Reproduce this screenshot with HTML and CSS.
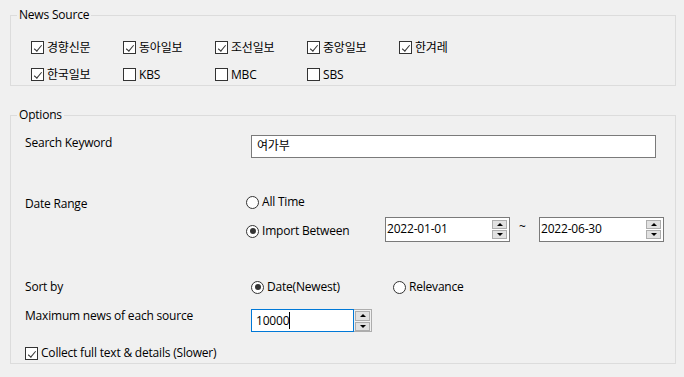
FILE: index.html
```html
<!DOCTYPE html>
<html lang="ko">
<head>
<meta charset="utf-8">
<title>News Options</title>
<link rel="stylesheet" href="styles.css">
</head>
<body>
<div class="page">
  <div class="group g1">
    <div class="legend">News Source</div>
    <div class="sources">
      <label class="item"><span class="chk on"></span>경향신문</label>
      <label class="item"><span class="chk on"></span>동아일보</label>
      <label class="item"><span class="chk on"></span>조선일보</label>
      <label class="item"><span class="chk on"></span>중앙일보</label>
      <label class="item"><span class="chk on"></span>한겨레</label>
      <label class="item"><span class="chk on"></span>한국일보</label>
      <label class="item"><span class="chk"></span>KBS</label>
      <label class="item"><span class="chk"></span>MBC</label>
      <label class="item"><span class="chk"></span>SBS</label>
    </div>
  </div>

  <div class="group g2">
    <div class="legend">Options</div>
    <div class="opts">
      <div class="row keyword">
        <div class="lbl wide">Search Keyword</div>
        <div class="textbox kw">여가부</div>
      </div>

      <div class="row daterange">
        <div class="lbl narrow dr">Date Range</div>
        <div class="drcol">
          <label class="radio-item"><span class="radio"></span>All Time</label>
          <div class="between">
            <label class="radio-item ib"><span class="radio on"></span>Import Between</label>
            <div class="spinbox date">
              <span class="val">2022-01-01</span>
              <span class="spin"><span class="btn up"></span><span class="btn down"></span></span>
            </div>
            <span class="tilde">~</span>
            <div class="spinbox date">
              <span class="val">2022-06-30</span>
              <span class="spin"><span class="btn up"></span><span class="btn down"></span></span>
            </div>
          </div>
        </div>
      </div>

      <div class="row sort">
        <div class="lbl wide">Sort by</div>
        <label class="radio-item newest"><span class="radio on"></span>Date(Newest)</label>
        <label class="radio-item"><span class="radio"></span>Relevance</label>
      </div>

      <div class="row max">
        <div class="lbl wide">Maximum news of each source</div>
        <div class="num">
          <div class="numtext">10000<span class="caret"></span></div>
          <div class="numspin"><span class="btn up"></span><span class="btn down"></span></div>
        </div>
      </div>

      <div class="row collect">
        <label class="item"><span class="chk on"></span>Collect full text &amp; details (Slower)</label>
      </div>
    </div>
  </div>
</div>
</body>
</html>
```

FILE: styles.css
```css
* { box-sizing: border-box; }
html, body { margin: 0; padding: 0; }
body {
  background: #f0f0f0;
  color: #000;
  font-family: "Segoe UI", "Open Sans", "Noto Sans CJK KR", sans-serif;
  font-size: 12px;
  line-height: 16px;
  letter-spacing: -0.2px;
  width: 684px;
  height: 377px;
  overflow: hidden;
}
.page { padding: 15px 8px 0 10px; }

.group { border: 1px solid #dcdcdc; }
.legend {
  width: fit-content;
  height: 16px;
  margin: -9px 0 0 6px;
  padding: 0 2px;
  background: #f0f0f0;
  line-height: 16px;
}

/* News source group */
.sources {
  display: grid;
  grid-template-columns: repeat(5, 92px);
  row-gap: 10px;
  margin: 16px 0 2px 20px;
}
.item {
  display: flex;
  align-items: center;
  gap: 3px;
  height: 17px;
  white-space: nowrap;
}
.chk {
  position: relative;
  flex: none;
  width: 13px;
  height: 13px;
  border: 1px solid #333;
  background: #fff;
}
.chk.on::after {
  content: "";
  position: absolute;
  left: 7px;
  top: 1px;
  width: 3px;
  height: 7px;
  border: solid #333;
  border-width: 0 1.4px 1.4px 0;
  transform: rotate(40deg);
  transform-origin: 0 0;
}

/* Options group */
.g2 { margin-top: 29px; }
.opts { padding: 0 0 2px 14px; }
.row { display: flex; }
.lbl { flex: none; white-space: nowrap; }
.lbl.wide { width: 226px; }
.lbl.narrow { width: 221px; }

.keyword { margin-top: 12px; height: 23px; align-items: flex-start; }
.textbox {
  border: 1px solid #7a7a7a;
  background: #fff;
  height: 23px;
  line-height: 20px;
  padding-left: 5px;
}
.textbox.kw { width: 405px; }

.daterange { margin-top: 36px; }
.dr { padding-top: 2px; }
.drcol { display: flex; flex-direction: column; }
.radio-item {
  display: flex;
  align-items: center;
  gap: 3px;
  height: 16px;
  white-space: nowrap;
}
.radio {
  position: relative;
  flex: none;
  width: 13px;
  height: 13px;
  border: 1px solid #333;
  border-radius: 50%;
  background: #fff;
}
.radio.on::after {
  content: "";
  position: absolute;
  left: 2.5px;
  top: 2.5px;
  width: 6px;
  height: 6px;
  border-radius: 50%;
  background: #333;
}
.between {
  display: flex;
  align-items: center;
  margin-top: 7px;
  height: 25px;
}
.radio-item.ib { width: 139px; padding-top: 3px; height: 19px; }
.spinbox {
  display: flex;
  justify-content: space-between;
  width: 125px;
  height: 25px;
  border: 1px solid #7a7a7a;
  background: #fff;
}
.spinbox .val { line-height: 22px; padding-left: 1px; }
.spin {
  display: flex;
  flex-direction: column;
  gap: 1px;
  padding: 2px 2px 0 0;
}
.btn {
  position: relative;
  display: block;
  width: 15px;
  height: 9px;
  background: #e1e1e1;
  border: 1px solid #adadad;
}
.btn::after {
  content: "";
  position: absolute;
  left: 4px;
  top: 2px;
  border-left: 3px solid transparent;
  border-right: 3px solid transparent;
}
.btn.up::after { border-bottom: 3px solid #000; }
.btn.down::after { border-top: 3px solid #000; }
.tilde { width: 29px; padding-left: 9px; margin-top: -6px; }

.sort { margin-top: 37px; height: 16px; align-items: center; }
.radio-item.newest { width: 142px; }

.max { margin-top: 13px; height: 24px; }
.num { display: flex; margin-top: 1px; height: 23px; }
.numtext {
  display: flex;
  align-items: center;
  width: 103px;
  height: 23px;
  border: 1px solid #0078d7;
  background: #fff;
  padding-left: 4px;
}
.caret {
  display: inline-block;
  width: 1px;
  height: 17px;
  background: #000;
}
.numspin {
  display: flex;
  flex-direction: column;
  gap: 1px;
  width: 18px;
  height: 23px;
  border: 1px solid #adadad;
  border-left: none;
  padding: 1px 0 0 1px;
}
.numspin .btn { width: 15px; height: 10px; }

.collect { margin-top: 13px; }
.collect .item { height: 16px; }
```
